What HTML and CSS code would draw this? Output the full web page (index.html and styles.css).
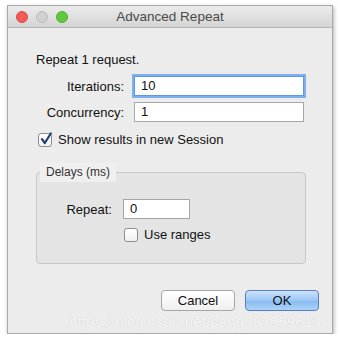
FILE: index.html
```html
<!DOCTYPE html>
<html lang="en">

<head>
    <meta charset="UTF-8">
    <title>Advanced Repeat</title>
    <link rel="stylesheet" href="styles.css">
</head>

<body>
    <div class="window">
        <div class="titlebar">
            <div class="lights">
                <span class="light close"></span>
                <span class="light minimize"></span>
                <span class="light zoom"></span>
            </div>
            <div class="title">Advanced Repeat</div>
        </div>
        <div class="content">
            <div class="intro">Repeat 1 request.</div>
            <div class="fields">
                <label class="field-label">Iterations:</label>
                <div class="input focused">10</div>
                <label class="field-label">Concurrency:</label>
                <div class="input">1</div>
            </div>
            <div class="check-row session">
                <span class="checkbox checked">
                    <svg width="14" height="14" viewBox="0 0 14 14">
                        <path d="M3 7.2 L5.8 11 L11.8 1.5" fill="none" stroke="#1d3f74" stroke-width="2.2" stroke-linecap="round" stroke-linejoin="round" />
                    </svg>
                </span>
                <span>Show results in new Session</span>
            </div>
            <fieldset class="group">
                <legend>Delays (ms)</legend>
                <div class="delay-row">
                    <label class="delay-label">Repeat:</label>
                    <div class="input small">0</div>
                </div>
                <div class="check-row ranges">
                    <span class="checkbox"></span>
                    <span>Use ranges</span>
                </div>
            </fieldset>
            <div class="buttons">
                <button class="btn">Cancel</button>
                <button class="btn primary">OK</button>
            </div>
        </div>
        <div class="watermark">https://blog.csdn.net/pang787559613</div>
    </div>
</body>

</html>
```

FILE: styles.css
```css
body {
    margin: 0;
    background-color: #fff;
    font-family: "Liberation Sans", Arial, sans-serif;
    font-size: 13px;
    color: #111;
}

.window {
    position: relative;
    width: 324px;
    height: 327px;
    margin: 5px 0 0 7px;
    border: 1px solid #a9a9a9;
    background-color: #ececec;
    box-shadow: 1px 2px 4px rgba(0, 0, 0, 0.3);
}

.titlebar {
    position: relative;
    height: 21px;
    background: linear-gradient(#ebebeb, #d4d4d4);
    border-bottom: 1px solid #b3b3b3;
}

.lights {
    display: flex;
    gap: 8px;
    padding: 5px 0 0 8px;
}

.light {
    width: 12px;
    height: 12px;
    border-radius: 50%;
    box-sizing: border-box;
}

.close {
    background-color: #f25a55;
    border: 1px solid #dd4c47;
}

.minimize {
    background-color: #d0d0d0;
    border: 1px solid #bcbcbc;
}

.zoom {
    background-color: #5fc93d;
    border: 1px solid #4fae2e;
}

.title {
    position: absolute;
    left: 0;
    right: 0;
    top: 3px;
    text-align: center;
    font-size: 13.5px;
    color: #4a4a4a;
}

.content {
    padding: 24px 28px 0 28px;
}

.intro {
    line-height: 15px;
}

.fields {
    display: grid;
    grid-template-columns: 88px 170px;
    column-gap: 10px;
    row-gap: 6px;
    margin-top: 9px;
    align-items: center;
}

.field-label {
    text-align: right;
}

.input {
    height: 18px;
    line-height: 18px;
    padding-left: 6px;
    background-color: #fff;
    border: 1px solid #a6a6a6;
}

.input.focused {
    border-color: #5d97e6;
    box-shadow: 0 0 0 2px #7eb0f0;
}

.check-row {
    display: flex;
    align-items: center;
    gap: 6px;
}

.session {
    margin: 10px 0 0 2px;
}

.checkbox {
    width: 14px;
    height: 14px;
    box-sizing: border-box;
    border: 1px solid #8d8d8d;
    border-radius: 3px;
    background: linear-gradient(#fff, #f1f1f1);
    position: relative;
}

.checkbox svg {
    position: absolute;
    left: 0;
    top: -2px;
}

.group {
    margin: 16px 0 0 0;
    padding: 17px 0 21px 0;
    width: 268px;
    border: 1px solid #c8c8c8;
    border-radius: 4px;
    background-color: #e4e4e4;
}

.group legend {
    margin-left: 3px;
    padding: 2px 6px 3px 6px;
    font-size: 12px;
    color: #333;
    background-color: #efefef;
}

.delay-row {
    display: flex;
    align-items: center;
    gap: 11px;
}

.delay-label {
    width: 75px;
    text-align: right;
}

.input.small {
    width: 59px;
}

.ranges {
    margin: 8px 0 0 87px;
}

.buttons {
    display: flex;
    justify-content: flex-end;
    gap: 10px;
    margin: 26px -15px 0 0;
}

.btn {
    width: 74px;
    height: 21px;
    padding: 0;
    font-family: "Liberation Sans", Arial, sans-serif;
    font-size: 13px;
    color: #111;
    border: 1px solid #a6a6a6;
    border-radius: 4px;
    background: linear-gradient(#ffffff, #efefef);
}

.btn.primary {
    border-color: #5a7fc0;
    background: linear-gradient(#cde3fa, #9bc6f5 50%, #88bbf3 51%, #acd3f8);
}

.watermark {
    position: absolute;
    left: 61px;
    top: 307px;
    font-size: 15.3px;
    color: #f6f6f6;
    text-shadow: 0 0 1px #c8c8c8;
}
```
